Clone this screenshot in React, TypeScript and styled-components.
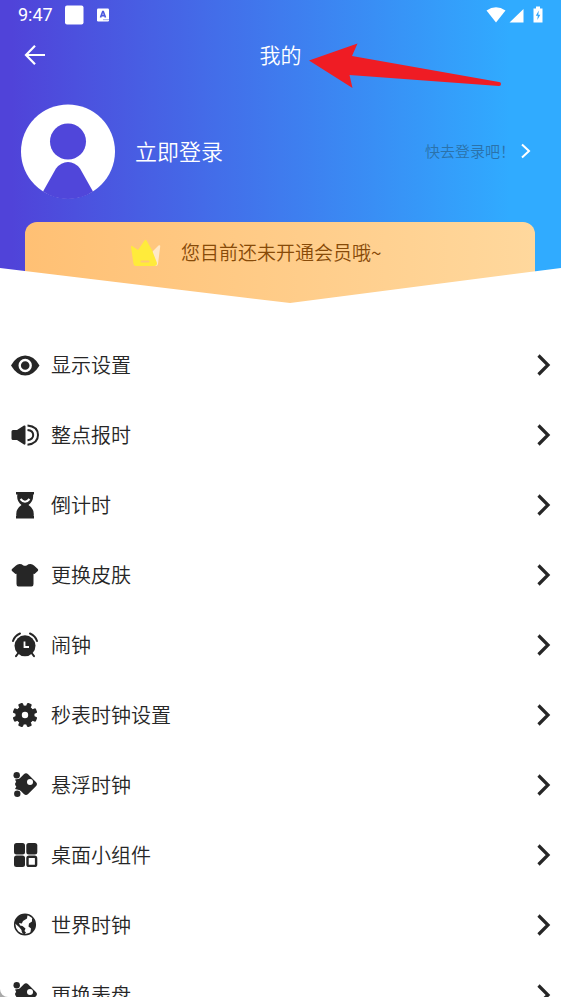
import React from "react";
import styled, { createGlobalStyle } from "styled-components";

const GlobalStyle = createGlobalStyle`
  * { box-sizing: border-box; }
  body {
    margin: 0;
    background: #a8a8a8;
    font-family: "Noto Sans CJK SC", "Noto Sans", sans-serif;
    font-weight: 350;
  }
  button { font: inherit; color: inherit; border: 0; padding: 0; background: none; cursor: pointer; }
  svg { display: block; flex: none; }
`;

const Page = styled.div`
  height: 100vh;
  overflow-x: hidden;
  overflow-y: auto;
  scrollbar-width: none;
  background: #fff;
  border-bottom-left-radius: 8px;
`;

const Header = styled.header`
  position: relative;
  color: #fff;
  background: linear-gradient(90deg, #5043d9 2%, #3f7bee 50%, #30abff 91%);

  &::after {
    content: "";
    position: absolute;
    left: 0;
    right: 0;
    bottom: 0;
    height: 35px;
    background: #fff;
    clip-path: polygon(0 0, 51.7% 100%, 100% 0, 100% 100%, 0 100%);
    pointer-events: none;
  }
`;

const StatusBar = styled.div`
  display: flex;
  align-items: center;
  justify-content: space-between;
  height: 30px;
  padding: 0 18px;
`;

const StatusGroup = styled.div`
  display: flex;
  align-items: center;
  gap: 12px;
`;

const Time = styled.span`
  font: 400 18px/30px Roboto, sans-serif;
`;

const TitleBar = styled.div`
  display: grid;
  grid-template-columns: 70px 1fr 70px;
  align-items: center;
  height: 50px;
`;

const BackButton = styled.button`
  display: flex;
  align-items: center;
  justify-content: center;
  height: 50px;
`;

const Title = styled.h1`
  margin: 0;
  text-align: center;
  font-size: 21px;
  line-height: 48px;
  height: 50px;
  font-weight: 350;
`;

const Profile = styled.button`
  display: flex;
  align-items: center;
  width: 100%;
  height: 142px;
  padding: 0 28px 0 20px;
  text-align: left;
`;

const LoginText = styled.span`
  flex: 1;
  padding: 0 0 2px 19px;
  font-size: 22px;
`;

const LoginHint = styled.span`
  padding: 0 2px 2px 0;
  font-size: 15px;
  color: #2b72aa;
`;

const Member = styled.button`
  display: flex;
  align-items: flex-start;
  width: calc(100% - 51px);
  height: 81px;
  margin: 0 25px;
  padding: 15px 0 0 105px;
  gap: 19px;
  border-radius: 12px 12px 0 0;
  background: linear-gradient(90deg, #ffc074, #ffd89d);
  color: #874a08;
  text-align: left;
`;

const MemberText = styled.span`
  font-size: 19px;
  line-height: 30px;
`;

const Pointer = styled.svg`
  position: absolute;
  top: 40px;
  left: 55%;
`;

const Menu = styled.ul`
  list-style: none;
  margin: 0;
  padding: 27px 0 0;
`;

const MenuButton = styled.button`
  display: flex;
  align-items: center;
  width: 100%;
  height: 70px;
  padding: 0 10px;
  gap: 11px;
  color: #262626;
  text-align: left;
`;

const MenuLabel = styled.span`
  flex: 1;
  font-size: 20px;
  line-height: 30px;
`;

const Chevron = ({ small = false }: { small?: boolean }) => (
  <svg width={16} height={small ? 20 : 24} viewBox={small ? "0 0 16 20" : "0 0 16 24"} fill="none" stroke="currentColor" strokeWidth={small ? 2 : 3.2}>
    <path d={small ? "M5 3.500l7 6.500-7 6.500" : "M3.500 2.500L13 12l-9.500 9.500"} />
  </svg>
);

const Icon = ({ children }: { children: React.ReactNode }) => (
  <svg width="30" height="30" viewBox="0 0 30 30" fill="currentColor" aria-hidden="true">
    {children}
  </svg>
);

const Eye = () => (
  <Icon>
    <path d="M1 15.500Q6.500 5.500 15.200 5.500T29.500 15.500Q23.500 25.500 15.200 25.500T1 15.500z" />
    <circle cx="15.200" cy="15.500" r="5.500" fill="none" stroke="#fff" strokeWidth="2.400" />
  </Icon>
);

const Speaker = () => (
  <Icon>
    <path d="M3 10h4l7-4.500q1.500-.5 1.500 1v17q0 1.500-1.500 1l-7-4.500H3q-1.500 0-1.500-1.500v-7Q1.500 10 3 10z" />
    <g fill="none" stroke="currentColor" strokeWidth="2">
      <path d="M17.500 5.500q10.500 1 10.500 9.600t-10.500 9.600M17.500 10q5.700.5 5.700 5.100t-5.700 5.100" />
    </g>
  </Icon>
);

const Hourglass = () => (
  <Icon>
    <path d="M6 2h18v2.500H6zM6 26h18v2.500H6z" />
    <path d="M7.500 4h15.500q1 7-4.500 11 6.500 4 5 12h-17q-1.500-8 5-12-5.500-4-4-11z" />
    <path d="M10.500 9q4.500 5.500 9 0" fill="none" stroke="#fff" strokeWidth="2" />
  </Icon>
);

const Shirt = () => (
  <Icon>
    <path d="M9.500 4q2.500 0 3.500 1.200 2 1 4 0Q18 4 20.500 4q2 0 3.500 1.500l3.800 3.500q.9 1 0 2L24.500 14l-1-.3V24q0 2.500-2 2.500H8.500q-2 0-2-2.500V13.700l-1 .3L2 11q-.9-1 0-2L6 5.500Q7.500 4 9.500 4z" />
  </Icon>
);

const Alarm = () => (
  <Icon>
    <circle cx="15" cy="15.800" r="10.500" />
    <g fill="none" stroke="currentColor" strokeWidth="2" strokeLinecap="round">
      <path d="M3 11Q4.500 6 10 3.500M20 3.500Q25.500 6 27 11M8 23.500l-2 2.700M22 23.500l2 2.700" />
    </g>
    <path d="M14.500 11.500V17H19" fill="none" stroke="#fff" strokeWidth="1.800" />
  </Icon>
);

const teeth = [22.5, 67.5, 112.5, 157.5, 202.5, 247.5, 292.5, 337.5];
const Gear = () => (
  <Icon>
    <circle cx="15" cy="15" r="6.400" fill="none" stroke="currentColor" strokeWidth="6.400" />
    {teeth.map((a) => (
      <rect key={a} x="12.500" y="2.600" width="5" height="6" rx="1.200" transform={`rotate(${a} 15 15)`} />
    ))}
  </Icon>
);

const Floating = () => (
  <Icon>
    <rect x="7.500" y="5.600" width="17" height="17" rx="3" transform="rotate(45 16 14.100)" />
    <path d="M5 9.500l6-1v12l-6-1.500 2.500-4.500z" />
    <circle cx="6.700" cy="5.200" r="3.200" />
    <circle cx="7.300" cy="23.700" r="3.200" />
    <circle cx="20" cy="12" r="3" fill="#fff" />
  </Icon>
);

const Widgets = () => (
  <Icon>
    <rect x="4" y="3" width="11" height="11.500" rx="2.500" />
    <rect x="16.300" y="3" width="11" height="11.500" rx="2.500" />
    <rect x="4" y="15.500" width="11" height="11.500" rx="2.500" />
    <rect x="17.500" y="16.700" width="8.600" height="9.200" rx="1.500" fill="none" stroke="currentColor" strokeWidth="2.400" />
  </Icon>
);

const Globe = () => (
  <Icon>
    <circle cx="15" cy="14.500" r="10.300" fill="none" stroke="currentColor" strokeWidth="1.500" />
    <path d="M15 4.500l2.500.5-.5 3.500-4 2.500-1.200 2.500-2.800-.5 1 2.500 2.500.5 3 2.500-1 2.500 1.500 1.500-1.500 2q-3-1.500-3-4.500l-2.500-3L4.500 13Q5.500 5 15 4.500z" />
    <path d="M22 8q4 3.500 3 9l-3 5.500-1.500-.5.500-3.500-2.500-2 .5-3L22 11.500z" />
  </Icon>
);

const items: [string, React.FC][] = [
  ["显示设置", Eye],
  ["整点报时", Speaker],
  ["倒计时", Hourglass],
  ["更换皮肤", Shirt],
  ["闹钟", Alarm],
  ["秒表时钟设置", Gear],
  ["悬浮时钟", Floating],
  ["桌面小组件", Widgets],
  ["世界时钟", Globe],
  ["更换表盘", Floating],
];

export default function App() {
  return (
    <>
      <GlobalStyle />
      <Page>
        <Header>
          <StatusBar>
            <StatusGroup>
              <Time>9:47</Time>
              <svg width="20" height="20" viewBox="0 0 20 20" fill="#fff">
                <rect x="0" y="0.500" width="18.500" height="19" rx="2" />
              </svg>
              <svg width="13" height="14" viewBox="0 0 13 14">
                <rect x="0" y="0.500" width="12" height="13" rx="1.200" fill="#fff" />
                <path d="M3.500 9.500L5.700 3.500h.6l2.200 6M4.500 7.600h3" fill="none" stroke="#4a57df" strokeWidth="1.600" />
                <path d="M6.500 11.700h1m1 0h1m1 0h1" stroke="#4a57df" />
              </svg>
            </StatusGroup>
            <svg width="58" height="20" viewBox="0 0 58 20" fill="#fff">
              <path d="M1.500 5.500Q11 -1 20.500 5.500L11 17.500z" />
              <path d="M38.500 4v13.500H24.500zM48.500 3.500h2.500V1.500H55v2h2.500v14H48.500z" />
              <path d="M53.800 5.500l-3 5.300h2L52.300 15l3-5.300h-2z" fill="#30a5fb" />
            </svg>
          </StatusBar>
          <TitleBar>
            <BackButton aria-label="返回">
              <svg width="22" height="22" viewBox="0 0 22 22" fill="none" stroke="#fff" strokeWidth="2.200">
                <path d="M21 11H3M11 1.800L2 11l9 9.200" />
              </svg>
            </BackButton>
            <Title>我的</Title>
          </TitleBar>
          <Profile>
            <svg width="96" height="96" viewBox="0 0 96 96">
              <circle cx="48" cy="48.500" r="47" fill="#fff" />
              <circle cx="48" cy="38.500" r="18" fill="#5046da" />
              <path d="M23 88.500L36 65.500Q41 59 48 59T60 65.500L73 88.500Q62 96 48 96T23 88.500z" fill="#5046da" />
            </svg>
            <LoginText>立即登录</LoginText>
            <LoginHint>快去登录吧！</LoginHint>
            <Chevron small />
          </Profile>
          <Member>
            <svg width="32" height="30" viewBox="0 0 32 30">
              <path d="M22 15L28.500 8.500q2-1 1.700 1L28 27q-.5 2-2 2h-7z" fill="#ffe8c8" />
              <path d="M1 10q-.3-2 1.500-.8L8 13l6.500-9.500q1-1.500 2 0L22 13l5 13q0 3-2.500 3H6q-2.200 0-2.500-2z" fill="#ffeb3b" />
              <path d="M11.500 24.500h7" stroke="#ffc875" strokeWidth="2" strokeLinecap="round" />
            </svg>
            <MemberText>您目前还未开通会员哦~</MemberText>
          </Member>
          <Pointer width="194" height="50" viewBox="0 0 194 50" fill="#ef1c24" aria-hidden="true">
            <path d="M0 20.500L48.500 3.500 43 16 190 42q2 0 2 2t-2 2L40.500 35l3 13z" />
          </Pointer>
        </Header>
        <Menu>
          {items.map(([label, Glyph]) => (
            <li key={label}>
              <MenuButton>
                <Glyph />
                <MenuLabel>{label}</MenuLabel>
                <Chevron />
              </MenuButton>
            </li>
          ))}
        </Menu>
      </Page>
    </>
  );
}
